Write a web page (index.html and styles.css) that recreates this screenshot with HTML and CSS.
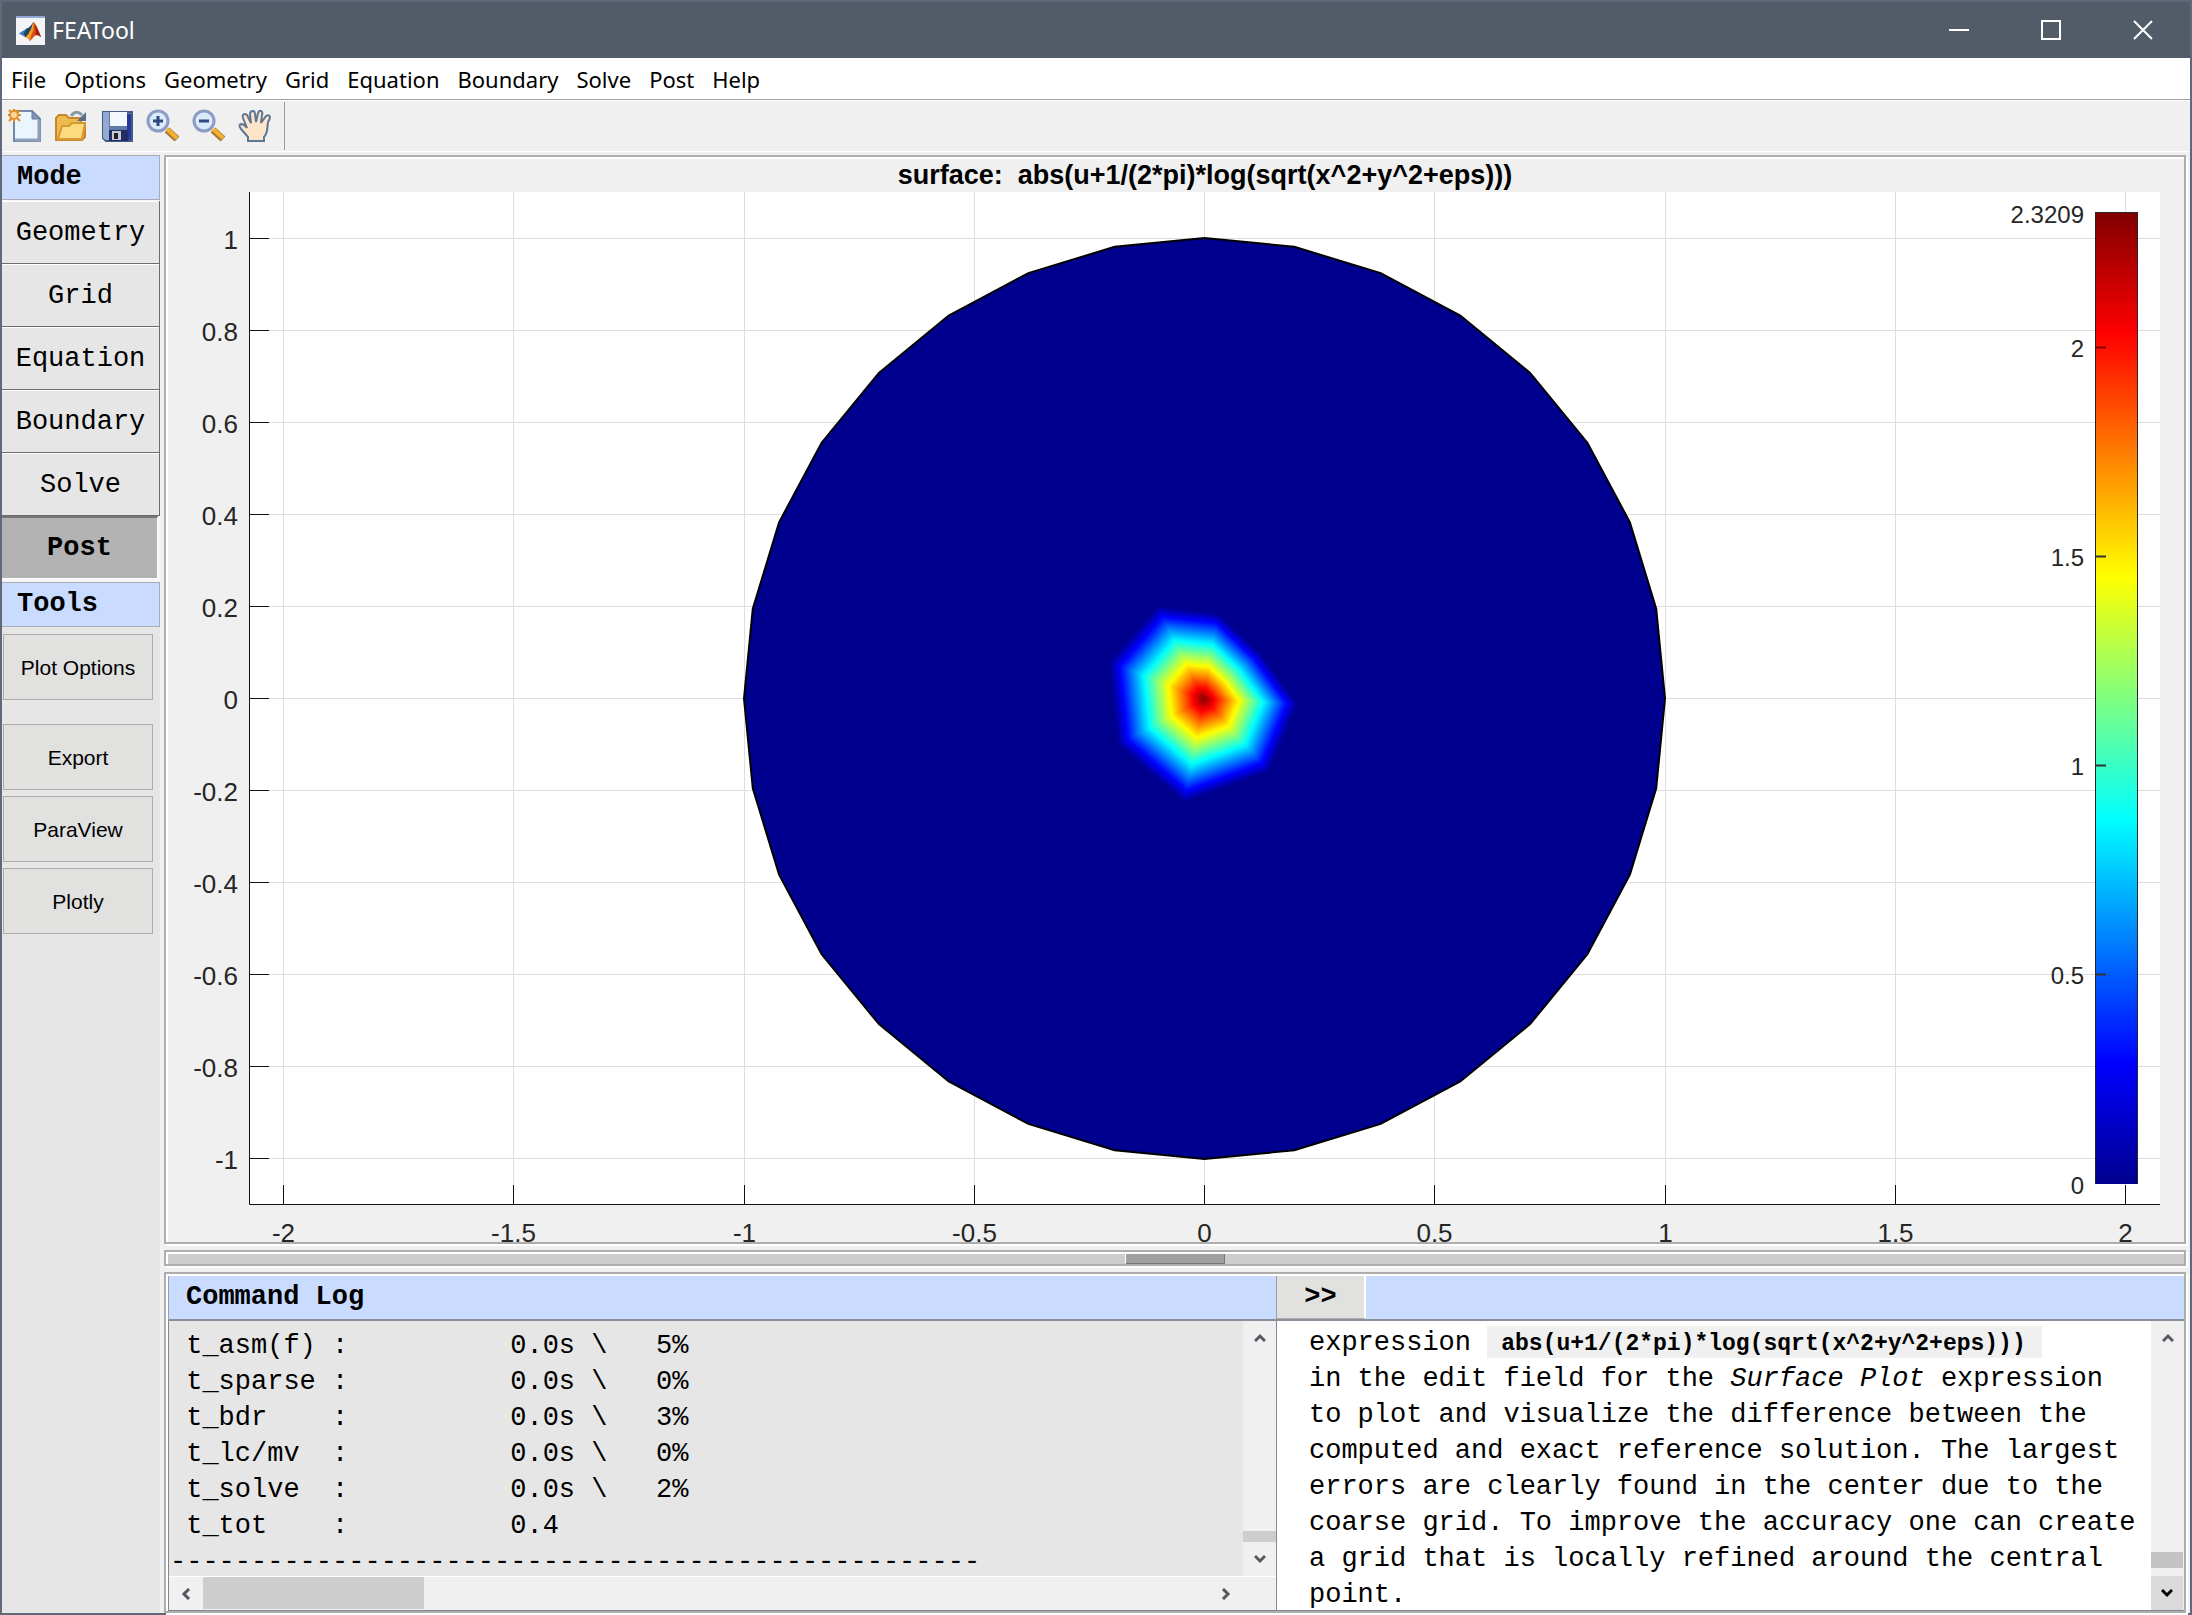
FILE: index.html
```html
<!DOCTYPE html>
<html lang="en">
<head>
<meta charset="utf-8">
<title>FEATool</title>
<link rel="stylesheet" href="styles.css">
</head>
<body>
<div class="window">
  <header class="titlebar">
    <svg class="logo" viewBox="0 0 30 30" aria-hidden="true">
      <rect width="30" height="30" fill="#f3f4f6"/>
      <rect width="30" height="2" fill="#8ea6cf"/>
      <path d="M3 18 L11 13 L15 17 L10 22 Z" fill="#3f78b4"/>
      <path d="M11 13 Q15 12 18 6 L15 17 L10 22 L8 18 Z" fill="#1f4468"/>
      <path d="M18 6 Q21 8 26 22 Q22 18 19 21 Q16 25 14 26 Q13 22 10 22 Q16 16 18 6 Z" fill="#d8501a"/>
      <path d="M18 6 Q19 14 16 19 Q15 23 14 26 Q13 22 10 22 Q16 16 18 6 Z" fill="#f6a21c"/>
      <path d="M19 8 Q22 12 26 22 Q22 19 20 20 Q21 14 19 8 Z" fill="#a81c10"/>
    </svg>
    <h1 class="app-name">FEATool</h1>
    <button class="caption" aria-label="Minimize"><svg viewBox="0 0 20 20"><path d="M0 10H20"/></svg></button>
    <button class="caption" aria-label="Maximize"><svg viewBox="0 0 20 20"><path d="M1 1H19V19H1Z"/></svg></button>
    <button class="caption" aria-label="Close"><svg viewBox="0 0 20 20"><path d="M1 1L19 19M19 1L1 19"/></svg></button>
  </header>

  <nav class="menubar">
    <button>File</button><button>Options</button><button>Geometry</button><button>Grid</button><button>Equation</button><button>Boundary</button><button>Solve</button><button>Post</button><button>Help</button>
  </nav>

  <div class="toolbar">
    <button aria-label="New"><svg viewBox="0 0 34 34">
      <path d="M6 2H24L32 10V32H6Z" fill="#eaf5fd" stroke="#7088ac" stroke-width="2"/>
      <path d="M31 11V31H7" fill="none" stroke="#8f9fba" stroke-width="3"/>
      <path d="M24 2V10H32Z" fill="#8296b8" stroke="#66789a"/>
      <path d="M6 0V13M0 6H13M1 1L12 12M12 1L1 12" stroke="#d98b2b" stroke-width="2"/>
      <circle cx="6" cy="6" r="4" fill="#fbd9a0" stroke="#e39226" stroke-width="2"/>
    </svg></button>
    <button aria-label="Open"><svg viewBox="0 0 34 34">
      <path d="M2 31V9L5 6H12L15 9H27V14H31V28L28 31Z" fill="#eebb4e" stroke="#c8872a" stroke-width="2"/>
      <path d="M4 30L8 17H15L18 14H31L28 30Z" fill="#fbdb7e" stroke="#d69a32" stroke-width="2"/>
      <path d="M17 7Q22 0 28 6" fill="none" stroke="#8b98a8" stroke-width="3"/>
      <path d="M32 3V12H23Z" fill="#5d6f84"/>
    </svg></button>
    <button aria-label="Save"><svg viewBox="0 0 34 34">
      <path d="M3 3H32V32H6L3 29Z" fill="#5e7ba8" stroke="#435c86" stroke-width="2"/>
      <path d="M3 3H9V31H6L3 29Z" fill="#94aad0"/>
      <path d="M10 3H27V17H10Z" fill="#f2f8fd"/>
      <path d="M27 5H31V31H27Z" fill="#26399a"/>
      <path d="M9 21H28V32H9Z" fill="#222c66"/>
      <path d="M12 22H21V31H12Z" fill="#c5cbd5"/>
      <path d="M14 24H18V30H14Z" fill="#202020"/>
    </svg></button>
    <button aria-label="Zoom in"><svg viewBox="0 0 34 34">
      <path d="M21 21L31 30" stroke="#a7783b" stroke-width="7"/>
      <path d="M21 20L31 29" stroke="#f5b22f" stroke-width="4"/>
      <circle cx="12" cy="12" r="10" fill="#dcebfb" stroke="#8b9dc4" stroke-width="3"/>
      <path d="M7 12H17M12 7V17" stroke="#2f4a80" stroke-width="3"/>
    </svg></button>
    <button aria-label="Zoom out"><svg viewBox="0 0 34 34">
      <path d="M21 21L31 30" stroke="#a7783b" stroke-width="7"/>
      <path d="M21 20L31 29" stroke="#f5b22f" stroke-width="4"/>
      <circle cx="12" cy="12" r="10" fill="#dcebfb" stroke="#8b9dc4" stroke-width="3"/>
      <path d="M7 12H17" stroke="#2f4a80" stroke-width="3"/>
    </svg></button>
    <button aria-label="Pan"><svg viewBox="0 0 34 34">
      <path d="M10 32V28L3 20Q0 16 3 15Q6 15 9 19L5 9Q4 5 7 5Q9 5 10 8L13 14L12 5Q12 2 15 2Q17 2 17 5L18 13L20 4Q21 1 23 2Q25 3 24 6L23 14L28 7Q31 5 32 8Q32 10 30 13L29 22Q28 26 26 28V32Z" fill="#fce5c8" stroke="#5f7795" stroke-width="2"/>
    </svg></button>
  </div>

  <main class="workspace">
    <aside class="sidebar">
      <h2 class="side-head">Mode</h2>
      <div class="modes">
        <button>Geometry</button>
        <button>Grid</button>
        <button>Equation</button>
        <button>Boundary</button>
        <button>Solve</button>
        <button class="active" aria-pressed="true">Post</button>
      </div>
      <h2 class="side-head">Tools</h2>
      <div class="tools">
        <button class="apart">Plot Options</button>
        <button>Export</button>
        <button>ParaView</button>
        <button>Plotly</button>
      </div>
    </aside>

    <div class="content">
      <section class="frame plot">
        <svg class="chart" viewBox="166 157 2018 1085" role="img" aria-label="Surface plot">
          <defs>
            <linearGradient id="jet" x1="0" y1="0" x2="0" y2="1">
              <stop offset="0" stop-color="#800000"/>
              <stop offset="0.125" stop-color="#ff0000"/>
              <stop offset="0.375" stop-color="#ffff00"/>
              <stop offset="0.625" stop-color="#00ffff"/>
              <stop offset="0.875" stop-color="#0000ff"/>
              <stop offset="1" stop-color="#00008f"/>
            </linearGradient>
          </defs>
          <rect x="249" y="192" width="1911" height="1012" fill="#fff"/>
          <path id="grid" class="grid"/>
          <path id="ticks" class="axis"/>
          <g id="ylabels" class="label end"></g>
          <g id="xlabels" class="label mid"></g>
          <text class="plot-title" x="1205" y="184">surface:  abs(u+1/(2*pi)*log(sqrt(x^2+y^2+eps)))</text>
          <polygon id="disc" class="disc"/>
          <g id="peak" transform="translate(1204 699)"></g>
          <rect x="2095" y="212" width="43" height="972" fill="url(#jet)"/>
          <path d="M2095.5 1183V212.5H2137.5V1183" class="bar-edge"/>
          <path d="M2095 347.500H2106" stroke="#800000" stroke-width="2"/>
          <path d="M2095 556.500H2106M2095 765.500H2106M2095 974.500H2106" stroke="#333" stroke-width="2"/>
          <g class="bar-label end">
            <text x="2084" y="223">2.3209</text>
            <text x="2084" y="357">2</text>
            <text x="2084" y="566">1.5</text>
            <text x="2084" y="775">1</text>
            <text x="2084" y="984">0.5</text>
            <text x="2084" y="1194">0</text>
          </g>
        </svg>
      </section>

      <div class="frame splitter"><div class="grip"></div></div>

      <section class="frame bottom">
        <div class="column">
          <h2 class="pane-head">Command Log</h2>
          <div class="log">
            <div class="log-view"><pre> t_
 t_asm(f) :          0.0s \   5%
 t_sparse :          0.0s \   0%
 t_bdr    :          0.0s \   3%
 t_lc/mv  :          0.0s \   0%
 t_solve  :          0.0s \   2%
 t_tot    :          0.4
--------------------------------------------------</pre></div>
            <div class="vscroll">
              <button aria-label="Scroll up"><svg viewBox="0 0 12 10"><path d="M1 8L6 3L11 8"/></svg></button>
              <div class="thumb small"></div>
              <button aria-label="Scroll down"><svg viewBox="0 0 12 10"><path d="M1 2L6 7L11 2"/></svg></button>
            </div>
            <div class="hscroll">
              <button aria-label="Scroll left"><svg viewBox="0 0 10 12"><path d="M8 1L3 6L8 11"/></svg></button>
              <div class="track"><div class="hthumb"></div></div>
              <button aria-label="Scroll right"><svg viewBox="0 0 10 12"><path d="M2 1L7 6L2 11"/></svg></button>
            </div>
          </div>
        </div>
        <div class="column">
          <div class="pane-head with-button"><button class="expand">&gt;&gt;</button></div>
          <div class="help">
            <p class="help-text">expression <code>abs(u+1/(2*pi)*log(sqrt(x^2+y^2+eps)))</code><br>in the edit field for the <em>Surface Plot</em> expression<br>to plot and visualize the difference between the<br>computed and exact reference solution. The largest<br>errors are clearly found in the center due to the<br>coarse grid. To improve the accuracy one can create<br>a grid that is locally refined around the central<br>point.</p>
            <div class="vscroll">
              <button aria-label="Scroll up"><svg viewBox="0 0 12 10"><path d="M1 8L6 3L11 8"/></svg></button>
              <div class="thumb"></div>
              <button class="pressed" aria-label="Scroll down"><svg viewBox="0 0 12 10"><path d="M1 2L6 7L11 2"/></svg></button>
            </div>
          </div>
        </div>
      </section>
    </div>
  </main>
</div>
<script src="plot.js"></script>
</body>
</html>
```
FILE: styles.css
```css
* { box-sizing: border-box; }
body { margin: 0; background: #eff0ef; color: #000; font-family: "Liberation Sans", Arial, sans-serif; }
button { margin: 0; padding: 0; border: 0; background: none; color: inherit; font: inherit; }
h1, h2, p, pre { margin: 0; }
svg { display: block; }

.window {
  display: flex;
  flex-direction: column;
  min-height: 100vh;
  border: 2px solid #5f6977;
  border-top-color: #5d6a79;
  background: #eff0ef;
}

.titlebar { display: flex; align-items: center; height: 56px; padding-left: 14px; background: #525c69; color: #fff; }
.logo { width: 29px; height: 29px; margin-right: 7px; }
.app-name { flex: 1; font: 400 23px/32px "Noto Sans", sans-serif; }
.caption { display: flex; align-items: center; justify-content: center; width: 92px; height: 56px; }
.caption:last-child { margin-right: 1px; }
.caption svg { width: 20px; height: 20px; fill: none; stroke: #fff; stroke-width: 2; }

.menubar { display: flex; gap: 18px; height: 42px; padding: 0 9px; border-bottom: 1px solid #a0a0a0; background: #fff; font: 22px/40px "Noto Sans", sans-serif; }

.toolbar { display: flex; align-items: center; gap: 12px; height: 52px; padding-left: 6px; border-top: 1px solid #fff; border-bottom: 1px solid #a0a0a0; }
.toolbar svg { width: 34px; height: 34px; }
.toolbar::after { content: ""; align-self: stretch; width: 1px; margin: 1px 0; background: #9a9a9a; }

.workspace { flex: 1; display: grid; grid-template-columns: 158px minmax(0, 1fr); gap: 4px; padding: 3px 4px 0 0; border-top: 1px solid #fff; margin-top: -1px; }

.sidebar { background: #e6e6e6; }
.side-head { height: 45px; padding-left: 15px; border: 1px solid #a9adb3; border-left: 0; background: #c9dcff; font: 700 27px/42px "Liberation Mono", monospace; }
.modes { display: grid; grid-auto-rows: 63px; padding: 1px 0 3px; background: #f6f6f6; }
.modes button { padding-top: 2px; border: 1px solid #6c6c6c; border-width: 0 1px 1px 0; box-shadow: inset 0 1px #fff; background: #e6e6e6; font: 27px/58px "Liberation Mono", monospace; }
.modes .active { margin-right: 2px; padding: 0; border-color: #fff; border-top: 2px solid #777; box-shadow: none; background: #b3b3b3; font-weight: 700; }
.tools { display: flex; flex-direction: column; gap: 6px; padding: 7px 7px 0 1px; }
.tools button { height: 66px; padding-top: 2px; border: 1px solid #adadad; background: #e1e1e0; font-size: 21px; }
.tools .apart { margin-bottom: 18px; }

.content { display: flex; flex-direction: column; gap: 6px; min-width: 0; }
.frame { border: 2px solid #adadad; box-shadow: inset 2px 2px #fff, 2px 2px #fff; }
.chart { width: 100%; height: auto; }
.plot { overflow: hidden; }
.grid { fill: none; stroke: #dedede; stroke-width: 1; }
.axis { fill: none; stroke: #111; stroke-width: 1; }
.disc { fill: #00008f; stroke: #000; stroke-width: 2; }
.bar-edge { fill: none; stroke: #262626; }
.label { fill: #262626; font-size: 26px; }
.bar-label { fill: #262626; font-size: 24px; }
.end { text-anchor: end; }
.mid { text-anchor: middle; }
.plot-title { font-size: 27px; font-weight: 700; text-anchor: middle; white-space: pre; }

.splitter { display: flex; justify-content: center; height: 16px; padding: 2px 0 0; background: #cdcdcd; }
.grip { width: 99px; border: 1px solid #777; border-width: 0 1px 1px 0; background: #a0a0a0; box-shadow: -1px -1px #fff; }

.bottom { flex: 1; display: grid; grid-template-columns: minmax(0, 1108fr) minmax(0, 908fr); padding: 2px 0 0 2px; }
.column { display: flex; flex-direction: column; min-width: 0; }
.pane-head { height: 45px; padding-left: 17px; border-left: 1px solid #9a9fa8; border-bottom: 2px solid #8a8f99; background: #c9dcff; font: 700 27px/42px "Liberation Mono", monospace; }
.with-button { padding-left: 0; }
.expand { height: 43px; width: 89px; border-right: 2px solid #fff; border-bottom: 1px solid #adadad; background: #e1e1e0; }

.log { flex: 1; display: grid; grid-template: minmax(0, 1fr) 34px / minmax(0, 1fr) 33px; border-left: 1px solid #828790; border-bottom: 1px solid #828790; background: #eff0ef; }
.log-view { height: 255px; overflow: hidden; padding-left: 1px; background: #e6e6e6; }
.log pre { margin-top: -29px; font: 27px/36px "Liberation Mono", monospace; }
.vscroll { display: flex; flex-direction: column; background: #eff0ef; }
.vscroll button { display: flex; align-items: center; justify-content: center; height: 34px; }
.vscroll svg { width: 12px; height: 10px; }
.vscroll path, .hscroll path { fill: none; stroke: #55585f; stroke-width: 3; }
.thumb { height: 16px; margin: auto 1px 8px 0; background: #c3c3c3; }
.thumb.small { height: 11px; margin: auto 0 0; background: #cdcdcd; }
.vscroll .pressed { margin-right: 1px; background: #dadada; }
.vscroll .pressed path { stroke: #000; }
.hscroll { display: flex; grid-column: 1 / -1; padding-right: 33px; border-top: 1px solid #fff; }
.hscroll button { display: flex; align-items: center; justify-content: center; width: 34px; }
.hscroll svg { width: 10px; height: 12px; }
.track { flex: 1; }
.hthumb { width: 22%; height: 32px; background: #cdcdcd; }

.help { flex: 1; display: grid; grid-template-columns: minmax(0, 1fr) 33px; border-left: 1px solid #828790; border-bottom: 1px solid #828790; background: #fff; }
.help-text { height: 288px; padding: 4px 0 0 32px; font: 27px/36px "Liberation Mono", monospace; white-space: nowrap; }
.help-text code { padding: 5px 16px 1px 14px; background: #eff0ef; font: 700 23px/33px "Liberation Mono", monospace; }
```
FILE: plot.js
```js
const NS = "http://www.w3.org/2000/svg";
const CX = 1204.5, CY = 698.5, UNIT = 460.5;
const byId = (id) => document.getElementById(id);

function addText(parent, x, y, value) {
  const t = document.createElementNS(NS, "text");
  t.setAttribute("x", x);
  t.setAttribute("y", y);
  t.textContent = value;
  parent.appendChild(t);
}

// Axes, grid lines and tick labels
let grid = "", ticks = "M249.5 192V1204.500H2160";
for (let i = -5; i <= 5; i++) {
  const y = Math.round(CY - i * 92 - 0.5) + 0.5;
  grid += `M250 ${y}H2160`;
  ticks += `M249 ${y}H269`;
  addText(byId("ylabels"), 238, y + 10, String(i / 5));
}
for (let i = -4; i <= 4; i++) {
  const x = Math.round(CX + i * UNIT / 2 - 0.5) + 0.5;
  grid += `M${x} 192V1204`;
  ticks += `M${x} 1185V1204`;
  addText(byId("xlabels"), x, 1242, String(i / 2));
}
byId("grid").setAttribute("d", grid);
byId("ticks").setAttribute("d", ticks);

// Unit disc, 32 boundary edges
const rim = [];
for (let k = 0; k < 32; k++) {
  const a = k * Math.PI / 16;
  rim.push(`${(CX + UNIT * Math.cos(a)).toFixed(1)},${(CY + UNIT * Math.sin(a)).toFixed(1)}`);
}
byId("disc").setAttribute("points", rim.join(" "));

// Peak: the value falls linearly from the centre to this ring of nodes
const ring = [[-48, -95], [14, -88], [58, -47], [96, 5], [67, 74], [-20, 106], [-88, 47], [-97, -38]];
const jet = (v) => {
  const c = (o) => Math.round(255 * Math.max(0, Math.min(1, 1.5 - Math.abs(4 * v - o))));
  return `rgb(${c(3)},${c(2)},${Math.max(c(1), v < 0.02 ? 143 : 0)})`;
};
const LEVELS = 60;
for (let i = 0; i < LEVELS; i++) {
  const s = 1 - i / LEVELS;
  const p = document.createElementNS(NS, "polygon");
  p.setAttribute("points", ring.map(([x, y]) => `${(x * s).toFixed(1)},${(y * s).toFixed(1)}`).join(" "));
  p.setAttribute("fill", jet(i / LEVELS));
  byId("peak").appendChild(p);
}
```
